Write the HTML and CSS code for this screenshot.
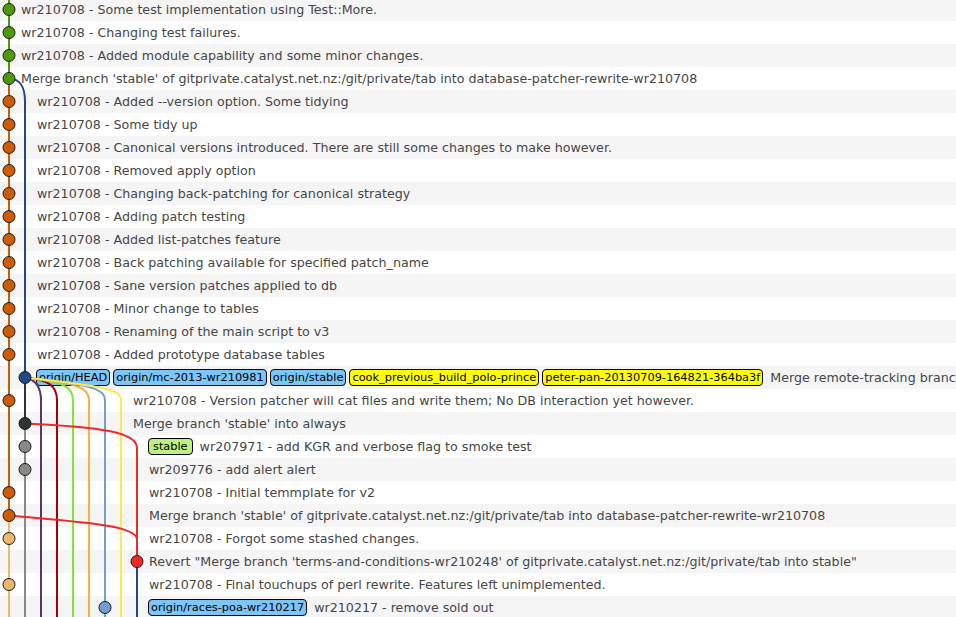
FILE: index.html
```html
<!DOCTYPE html>
<html>
<head>
<meta charset="utf-8">
<title>History</title>
<link rel="stylesheet" href="styles.css">
</head>
<body>
<div class="history">
  <svg class="graph" width="956" height="621" viewBox="0 0 956 621" xmlns="http://www.w3.org/2000/svg">
    <g fill="none" stroke-width="2">
      <path d="M9,0 V80.5" stroke="#4e9a06"/>
      <path d="M9,80.5 V517.5" stroke="#ce5c00"/>
      <path d="M9,517.5 V621" stroke="#e9b96e"/>
      <path d="M9,80.5 C20,81 25,88 25,103.5 V379.5" stroke="#204a87"/>
      <path d="M25,379.5 V425.5" stroke="#2e3436"/>
      <path d="M25,425.5 V621" stroke="#888a85"/>
      <path d="M25,379.5 C33,381 41,386 41,402.5 V621" stroke="#5c3566"/>
      <path d="M25,379.5 C49,382.5 57,387 57,402.5 V621" stroke="#a40000"/>
      <path d="M25,379.5 C63,384 73,388 73,402.5 V621" stroke="#8ae234"/>
      <path d="M25,379.5 C77,385.5 89,389 89,402.5 V621" stroke="#fcaf3e"/>
      <path d="M25,379.5 C90,387 105,390 105,402.5 V621" stroke="#729fcf"/>
      <path d="M25,379.5 C104,388.5 121,391 121,402.5 V621" stroke="#fce94f"/>
      <path d="M25,425.5 C100,429 137,434 137,450 V563.5" stroke="#ef2929"/>
      <path d="M9,517.5 C80,524 136,527 137,541" stroke="#ef2929"/>
      <path d="M137,563.5 V621" stroke="#204a87"/>
    </g>
    <g stroke="#1a1a1a" stroke-width="1">
      <circle cx="9" cy="11.5" r="6" fill="#4e9a06"/>
      <circle cx="9" cy="34.5" r="6" fill="#4e9a06"/>
      <circle cx="9" cy="57.5" r="6" fill="#4e9a06"/>
      <circle cx="9" cy="80.5" r="6" fill="#4e9a06"/>
      <circle cx="9" cy="103.5" r="6" fill="#ce5c00"/>
      <circle cx="9" cy="126.5" r="6" fill="#ce5c00"/>
      <circle cx="9" cy="149.5" r="6" fill="#ce5c00"/>
      <circle cx="9" cy="172.5" r="6" fill="#ce5c00"/>
      <circle cx="9" cy="195.5" r="6" fill="#ce5c00"/>
      <circle cx="9" cy="218.5" r="6" fill="#ce5c00"/>
      <circle cx="9" cy="241.5" r="6" fill="#ce5c00"/>
      <circle cx="9" cy="264.5" r="6" fill="#ce5c00"/>
      <circle cx="9" cy="287.5" r="6" fill="#ce5c00"/>
      <circle cx="9" cy="310.5" r="6" fill="#ce5c00"/>
      <circle cx="9" cy="333.5" r="6" fill="#ce5c00"/>
      <circle cx="9" cy="356.5" r="6" fill="#ce5c00"/>
      <circle cx="25" cy="379.5" r="6" fill="#204a87"/>
      <circle cx="9" cy="402.5" r="6" fill="#ce5c00"/>
      <circle cx="25" cy="425.5" r="6" fill="#2e3436"/>
      <circle cx="25" cy="448.5" r="6" fill="#888a85"/>
      <circle cx="25" cy="471.5" r="6" fill="#888a85"/>
      <circle cx="9" cy="494.5" r="6" fill="#ce5c00"/>
      <circle cx="9" cy="517.5" r="6" fill="#ce5c00"/>
      <circle cx="9" cy="540.5" r="6" fill="#e9b96e"/>
      <circle cx="137" cy="563.5" r="6" fill="#ef2929"/>
      <circle cx="9" cy="586.5" r="6" fill="#e9b96e"/>
      <circle cx="105" cy="609.5" r="6" fill="#729fcf"/>
    </g>
  </svg>

  <div class="row lanes-1"><span class="msg">wr210708 - Some test implementation using Test::More.</span></div>
  <div class="row lanes-1"><span class="msg">wr210708 - Changing test failures.</span></div>
  <div class="row lanes-1"><span class="msg">wr210708 - Added module capability and some minor changes.</span></div>
  <div class="row lanes-1"><span class="msg">Merge branch 'stable' of gitprivate.catalyst.net.nz:/git/private/tab into database-patcher-rewrite-wr210708</span></div>
  <div class="row lanes-2"><span class="msg">wr210708 - Added --version option. Some tidying</span></div>
  <div class="row lanes-2"><span class="msg">wr210708 - Some tidy up</span></div>
  <div class="row lanes-2"><span class="msg">wr210708 - Canonical versions introduced. There are still some changes to make however.</span></div>
  <div class="row lanes-2"><span class="msg">wr210708 - Removed apply option</span></div>
  <div class="row lanes-2"><span class="msg">wr210708 - Changing back-patching for canonical strategy</span></div>
  <div class="row lanes-2"><span class="msg">wr210708 - Adding patch testing</span></div>
  <div class="row lanes-2"><span class="msg">wr210708 - Added list-patches feature</span></div>
  <div class="row lanes-2"><span class="msg">wr210708 - Back patching available for specified patch_name</span></div>
  <div class="row lanes-2"><span class="msg">wr210708 - Sane version patches applied to db</span></div>
  <div class="row lanes-2"><span class="msg">wr210708 - Minor change to tables</span></div>
  <div class="row lanes-2"><span class="msg">wr210708 - Renaming of the main script to v3</span></div>
  <div class="row lanes-2"><span class="msg">wr210708 - Added prototype database tables</span></div>
  <div class="row lanes-2">
    <span class="refs">
      <span class="ref remote">origin/HEAD</span>
      <span class="ref remote">origin/mc-2013-wr210981</span>
      <span class="ref remote">origin/stable</span>
      <span class="ref local">cook_previous_build_polo-prince</span>
      <span class="ref local">peter-pan-20130709-164821-364ba3f</span>
    </span>
    <span class="msg">Merge remote-tracking branch 'origin/stable' into database-patcher-rewrite-wr210708</span>
  </div>
  <div class="row lanes-8"><span class="msg">wr210708 - Version patcher will cat files and write them; No DB interaction yet however.</span></div>
  <div class="row lanes-8"><span class="msg">Merge branch 'stable' into always</span></div>
  <div class="row lanes-9">
    <span class="refs"><span class="ref tag">stable</span></span>
    <span class="msg">wr207971 - add KGR and verbose flag to smoke test</span>
  </div>
  <div class="row lanes-9"><span class="msg">wr209776 - add alert alert</span></div>
  <div class="row lanes-9"><span class="msg">wr210708 - Initial temmplate for v2</span></div>
  <div class="row lanes-9"><span class="msg">Merge branch 'stable' of gitprivate.catalyst.net.nz:/git/private/tab into database-patcher-rewrite-wr210708</span></div>
  <div class="row lanes-9"><span class="msg">wr210708 - Forgot some stashed changes.</span></div>
  <div class="row lanes-9"><span class="msg">Revert "Merge branch 'terms-and-conditions-wr210248' of gitprivate.catalyst.net.nz:/git/private/tab into stable"</span></div>
  <div class="row lanes-9"><span class="msg">wr210708 - Final touchups of perl rewrite. Features left unimplemented.</span></div>
  <div class="row lanes-9">
    <span class="refs"><span class="ref remote">origin/races-poa-wr210217</span></span>
    <span class="msg">wr210217 - remove sold out</span>
  </div>
</div>
</body>
</html>
```
FILE: styles.css
```css
html, body {
  margin: 0;
  padding: 0;
  background: #ffffff;
  overflow: hidden;
}

body {
  font-family: "DejaVu Sans", "Liberation Sans", sans-serif;
  font-size: 12.67px;
  color: #464646;
}

.history {
  position: relative;
  margin-top: -2px;
}

.graph {
  position: absolute;
  top: 0;
  left: 0;
  pointer-events: none;
}

.row {
  height: 23px;
  line-height: 23px;
  display: flex;
  align-items: center;
  white-space: nowrap;
  overflow: hidden;
}

.row:nth-child(even) {
  background: #f5f5f5;
}

.row:nth-child(odd) {
  background: #ffffff;
}

.lanes-1 { padding-left: 21px; }
.lanes-2 { padding-left: 37px; }
.lanes-8 { padding-left: 133px; }
.lanes-9 { padding-left: 149px; }

.refs {
  display: flex;
  gap: 3px;
  margin-left: -1px;
  margin-right: 7px;
}

.ref {
  display: inline-block;
  height: 15px;
  line-height: 15px;
  padding: 0 2px;
  border: 1px solid #000;
  border-radius: 4px;
  color: #000;
  font-size: 11.33px;
}

.ref.remote { background: #7cc5f7; }
.ref.local { background: #ffff00; }
.ref.tag { background: #bdf07c; padding: 0 4px; }

.msg {
  white-space: nowrap;
}
```
